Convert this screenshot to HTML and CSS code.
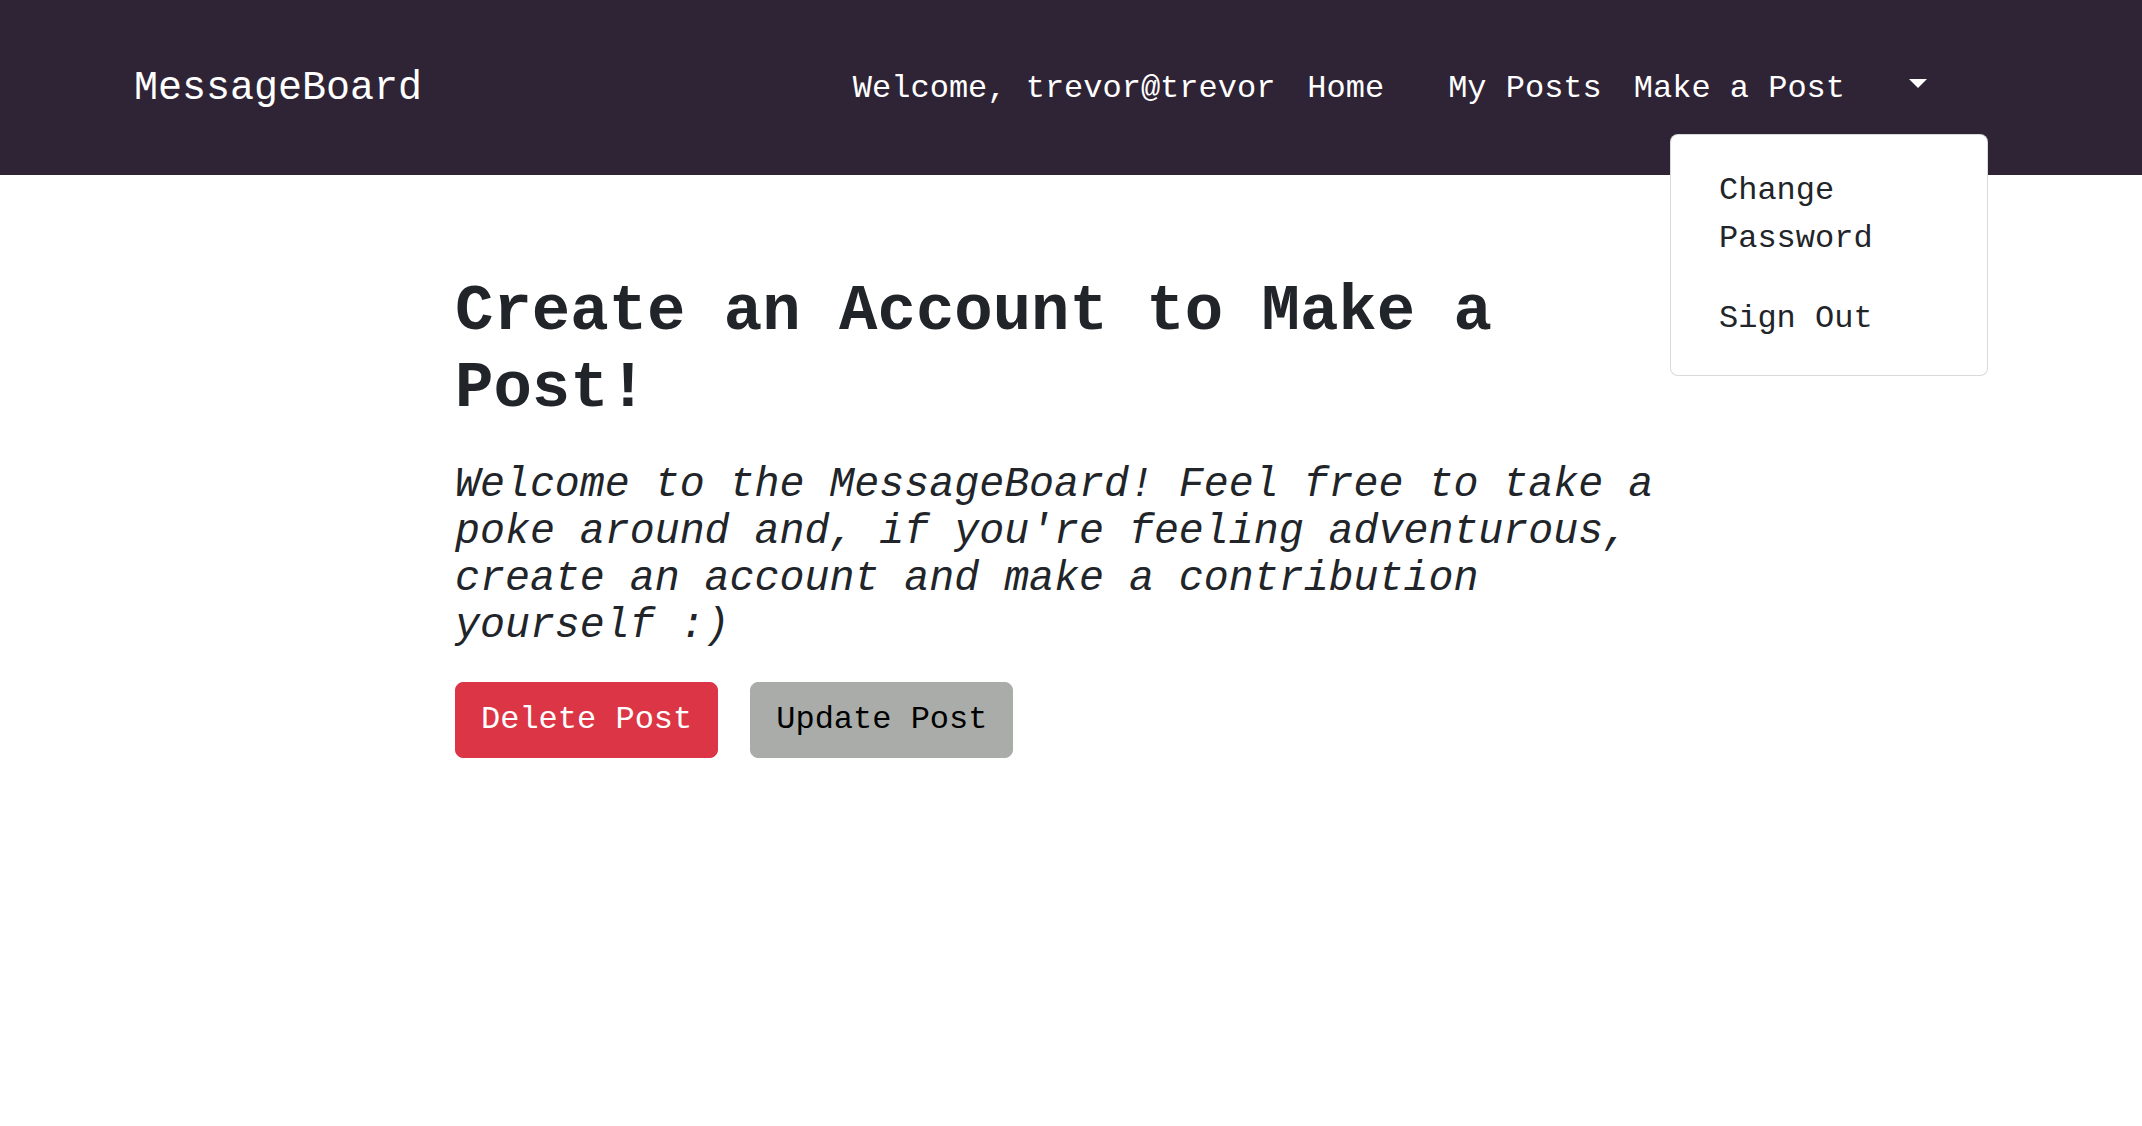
FILE: index.html
```html
<!DOCTYPE html>
<html lang="en">
<head>
<meta charset="utf-8">
<title>MessageBoard</title>
<link rel="stylesheet" href="styles.css">
</head>
<body>
<nav class="navbar">
  <a class="brand" href="#">MessageBoard</a>
  <ul class="nav">
    <li class="nav-item"><span class="nav-link">Welcome, trevor@trevor</span></li>
    <li class="nav-item"><a class="nav-link" href="#">Home</a></li>
    <li class="nav-item spacer"></li>
    <li class="nav-item"><a class="nav-link" href="#">My Posts</a></li>
    <li class="nav-item"><a class="nav-link" href="#">Make a Post</a></li>
    <li class="nav-item dropdown">
      <a class="nav-link toggle" href="#"><span class="caret"></span></a>
      <div class="menu">
        <a class="menu-item" href="#">Change Password</a>
        <a class="menu-item" href="#">Sign Out</a>
      </div>
    </li>
  </ul>
</nav>
<main class="container">
  <h2 class="title">Create an Account to Make a Post!</h2>
  <p class="lead">Welcome to the MessageBoard! Feel free to take a poke around and, if you're feeling adventurous, create an account and make a contribution yourself :)</p>
  <div class="actions">
    <button class="btn btn-danger" type="button">Delete Post</button>
    <button class="btn btn-gray" type="button">Update Post</button>
  </div>
</main>
</body>
</html>
```

FILE: styles.css
```css
* {
  box-sizing: border-box;
}

html, body {
  margin: 0;
  padding: 0;
}

body {
  font-family: "Courier New", "Nimbus Mono PS", "Nimbus Mono L", "FreeMono", Courier, "Liberation Mono", monospace;
  font-size: 32px;
  line-height: 1.5;
  color: #212529;
  background: #ffffff;
}

a {
  text-decoration: none;
}

.navbar {
  height: 175px;
  background: #2f2336;
  display: flex;
  align-items: center;
  justify-content: space-between;
  padding: 0 199px 0 134px;
}

.brand {
  color: #ffffff;
  font-size: 40px;
  line-height: 60px;
  padding-top: 3px;
}

.nav {
  display: flex;
  align-items: center;
  list-style: none;
  margin: 0;
  padding: 2px 0 0;
}

.nav-item {
  line-height: 48px;
}

.spacer {
  width: 32px;
  height: 48px;
}

.nav-link {
  display: block;
  color: #ffffff;
  padding: 0 16px;
  white-space: nowrap;
}

.dropdown {
  position: relative;
}

.caret {
  display: inline-block;
  margin-left: 32px;
  vertical-align: 0.255em;
  border-top: 0.3em solid #ffffff;
  border-left: 0.3em solid transparent;
  border-right: 0.3em solid transparent;
  border-bottom: 0;
}

.menu {
  position: absolute;
  right: -45px;
  top: calc(100% + 21px);
  width: 318px;
  background: #ffffff;
  border: 1px solid rgba(0, 0, 0, 0.15);
  border-radius: 8px;
  padding: 16px 0;
  z-index: 10;
}

.menu-item {
  display: block;
  padding: 16px 48px;
  color: #212529;
  line-height: 48px;
}

.container {
  width: 1232px;
  margin: 0 auto;
  padding-top: 99px;
}

.title {
  font-size: 64px;
  font-weight: bold;
  line-height: 1.2;
  margin: 0 0 33px;
}

.lead {
  font-size: 41.6px;
  font-style: italic;
  line-height: 47.3px;
  margin: 0 0 32px;
}

.actions {
  display: flex;
  gap: 32px;
}

.btn {
  font-family: inherit;
  font-size: 32px;
  line-height: 48px;
  padding: 13px 25px;
  border: 1px solid transparent;
  border-radius: 8px;
  cursor: pointer;
}

.btn-danger {
  background: #dc3545;
  border-color: #dc3545;
  color: #ffffff;
}

.btn-gray {
  background: #aaaca9;
  border-color: #aaaca9;
  color: #000000;
}
```
